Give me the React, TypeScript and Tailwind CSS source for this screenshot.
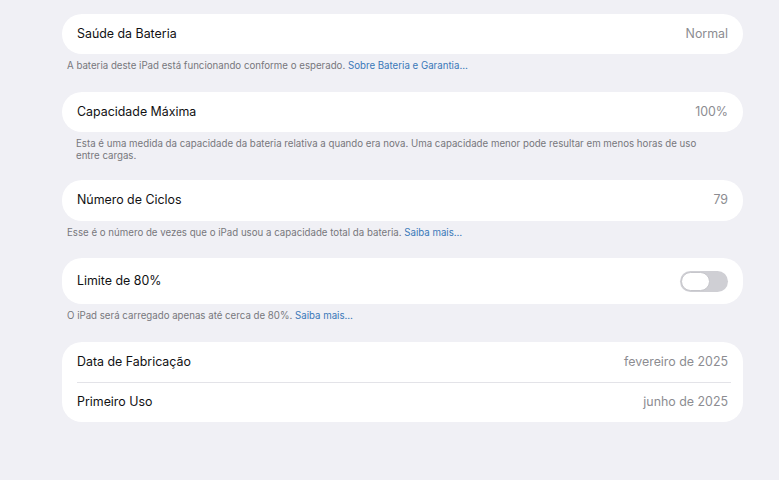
import type React from "react"

function Card({ children, className = "" }: { children: React.ReactNode; className?: string }) {
  return <div className={`bg-white rounded-[20px] ${className}`}>{children}</div>
}

function Row({ label, value, h = "h-[40px]" }: { label: string; value?: React.ReactNode; h?: string }) {
  return (
    <div className={`flex items-center justify-between px-[15px] ${h}`}>
      <span className="text-[12.4px] text-[#111113]">{label}</span>
      {typeof value === "string" ? <span className="text-[12.4px] text-[#8c8c91]">{value}</span> : value}
    </div>
  )
}

function Footer({ children, className = "" }: { children: React.ReactNode; className?: string }) {
  return <p className={`mt-[6px] text-[9.7px] leading-[12px] text-[#77777c] ${className}`}>{children}</p>
}

function Link({ children }: { children: React.ReactNode }) {
  return <span className="text-[#3a78b8]">{children}</span>
}

function Toggle() {
  return (
    <div className="flex items-center w-[48px] h-[21px] rounded-full bg-[#cfcfd4] p-[1px]">
      <div className="w-[29px] h-[19px] rounded-full bg-white border border-[#c6c6cb]" />
    </div>
  )
}

export default function App() {
  return (
    <div
      className="w-[779px] h-[480px] bg-[#f0f0f5] pl-[62px] pr-[36px] pt-[14px] flex flex-col"
      style={{ fontFamily: "Inter, 'Noto Sans', sans-serif" }}
    >
      <Card>
        <Row label="Saúde da Bateria" value="Normal" />
      </Card>
      <Footer className="pl-[5px]">
        A bateria deste iPad está funcionando conforme o esperado. <Link>Sobre Bateria e Garantia…</Link>
      </Footer>

      <Card className="mt-[20px]">
        <Row label="Capacidade Máxima" value="100%" />
      </Card>
      <Footer className="pl-[14px]">
        Esta é uma medida da capacidade da bateria relativa a quando era nova. Uma capacidade menor pode resultar em menos horas de uso
        <br />
        entre cargas.
      </Footer>

      <Card className="mt-[18px]">
        <Row label="Número de Ciclos" value="79" h="h-[41px]" />
      </Card>
      <Footer className="pl-[5px]">
        Esse é o número de vezes que o iPad usou a capacidade total da bateria. <Link>Saiba mais…</Link>
      </Footer>

      <Card className="mt-[19px]">
        <Row label="Limite de 80%" value={<Toggle />} h="h-[46px]" />
      </Card>
      <Footer className="pl-[5px]">
        O iPad será carregado apenas até cerca de 80%. <Link>Saiba mais…</Link>
      </Footer>

      <Card className="mt-[20px]">
        <Row label="Data de Fabricação" value="fevereiro de 2025" />
        <div className="ml-[15px] mr-[12px] h-px bg-[#e3e3e8]" />
        <Row label="Primeiro Uso" value="junho de 2025" h="h-[39px]" />
      </Card>
    </div>
  )
}
